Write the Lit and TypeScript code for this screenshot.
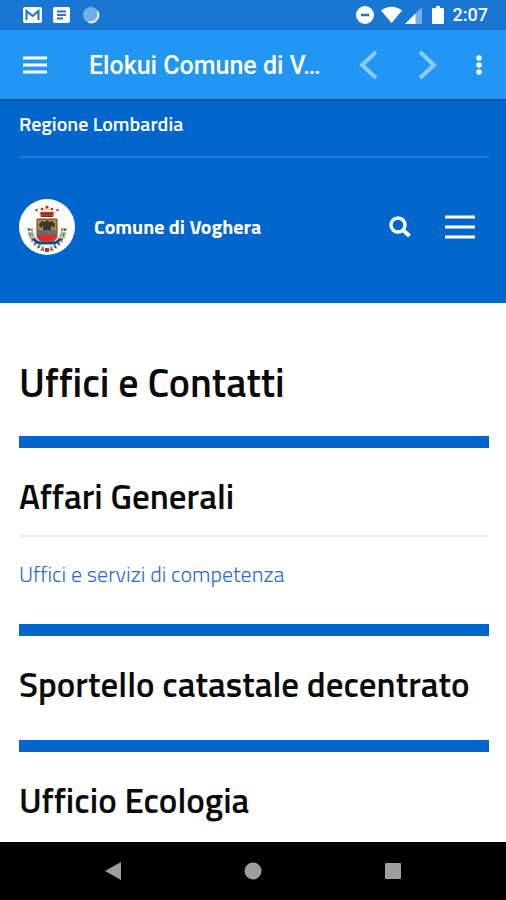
import { LitElement, html, css, svg, nothing } from "lit";
import { customElement } from "lit/decorators.js";

interface Office {
  name: string;
  link?: string;
}

const OFFICES: Office[] = [
  { name: "Affari Generali", link: "Uffici e servizi di competenza" },
  { name: "Sportello catastale decentrato" },
  { name: "Ufficio Ecologia" },
];

const crest = svg`
  <circle cx="28" cy="28" r="28" fill="#fff"/>
  <path d="M17 10l4 5 3-5 4-2 4 2 3 5 4-5-4 8H21z" fill="#e9d9c6"/>
  <path d="M21 13h14l-1 5H22z" fill="#b5452c"/>
  <path d="M22 15h12M22 17.500h12" stroke="#7a2a1c" stroke-width="1"/>
  <g fill="#a23c28"><circle cx="28" cy="8" r="1.600"/><circle cx="23" cy="10" r="1.300"/><circle cx="33" cy="10" r="1.300"/><circle cx="17.500" cy="11" r="1.200"/><circle cx="38.500" cy="11" r="1.200"/></g>
  <path d="M11 29c0 9 5 17 15 22M45 29c0 9-5 17-15 22" fill="none" stroke="#a9b09c" stroke-width="6" stroke-dasharray="2 2"/>
  <path d="M10 30c1 9 6 17 15 21M46 30c-1 9-6 17-15 21" fill="none" stroke="#465a3c" stroke-width="2" stroke-dasharray="2 3"/>
  <path d="M13 31c0 7 4 13 10 17M43 31c0 7-4 13-10 17" fill="none" stroke="#5d6b4c" stroke-width="2" stroke-dasharray="1 3"/>
  <path d="M15 40c3 5 8 4 13 4s10 1 13-4" fill="none" stroke="#24408f" stroke-width="3"/>
  <path d="M18 20h20v17c0 4-5 6-10 6s-10-2-10-6z" fill="#b08d45" stroke="#50452f"/>
  <path d="M19 31h18v6H19z" fill="#6a6a70"/>
  <path d="M19 36h18v1c0 4-4 5-9 5s-9-1-9-5z" fill="#e02b2b"/>
  <path d="M20 25l3-3 3 1 2-2 2 2 3-1 3 3-1 4-3-2v4h-8v-4l-3 2z" fill="#3d3728"/>
  <rect x="26" y="49" width="4" height="4" fill="#b92f2f"/>
`;

@customElement("app-root")
export class AppRoot extends LitElement {
  static styles = css`
    :host {
      display: flex;
      flex-direction: column;
      height: 100vh;
      overflow: hidden;
      background: #fff;
      color: #0a0a0a;
      font-family: "Titillium Web", "Noto Sans", sans-serif;
    }
    * { box-sizing: border-box; }
    svg { display: block; flex: none; }
    button {
      display: grid;
      place-items: center;
      padding: 0;
      border: 0;
      background: none;
      color: inherit;
      cursor: pointer;
    }
    h1, h2 { margin: 0; }
    .status {
      display: flex;
      flex: none;
      align-items: center;
      height: 30px;
      padding: 0 18px 0 22px;
      background: #1976d2;
      color: #fff;
      font: 500 18px/32px Roboto, sans-serif;
    }
    .notices { display: flex; align-items: center; gap: 10px; }
    .signals { display: flex; align-items: center; gap: 6px; margin-left: auto; }
    .clock { margin-left: 1px; }
    .appbar {
      position: relative;
      display: flex;
      flex: none;
      align-items: center;
      height: 69px;
      padding: 0 6px 0 12px;
      background: #2196f3;
      color: #fff;
      box-shadow: 0 1px 2px rgba(0, 0, 0, 0.4);
    }
    .appbar button { height: 48px; width: 46px; }
    .title {
      flex: 1;
      min-width: 0;
      margin-left: 31px;
      padding-top: 2px;
      overflow: hidden;
      white-space: nowrap;
      text-overflow: ellipsis;
      font: 500 25px/34px Roboto, sans-serif;
    }
    .appbar .step { width: 60px; color: #90caf9; }
    .appbar .more { width: 42px; }
    .site {
      flex: none;
      padding: 0 17px 0 19px;
      background: #0066cc;
      color: #fff;
    }
    .region {
      display: block;
      padding: 11px 0 18px;
      border-bottom: 2px solid #1f79d2;
      color: #fff;
      font-weight: 600;
      font-size: 20px;
      line-height: 28px;
      text-decoration: none;
    }
    .brandbar { display: flex; align-items: center; padding: 41px 7px 48px 0; }
    .brand {
      display: flex;
      align-items: center;
      gap: 19px;
      margin-right: auto;
      color: #fff;
      font-weight: 700;
      font-size: 20px;
      line-height: 28px;
      text-decoration: none;
    }
    .brandbar button { width: 44px; height: 44px; }
    .brandbar .menu { margin-left: 16px; }
    main { flex: 1; min-height: 0; overflow: hidden; padding: 0 17px 0 19px; }
    h1 {
      padding: 56px 0 29px;
      font-weight: 600;
      font-size: 40px;
      line-height: 48px;
      white-space: nowrap;
    }
    .office { border-top: 12px solid #0066cc; padding-bottom: 36px; }
    h2 {
      padding-top: 28px;
      font-weight: 600;
      font-size: 35px;
      line-height: 40px;
      white-space: nowrap;
    }
    .detail { margin-top: 19px; padding-top: 23px; border-top: 2px solid #f0f0f0; }
    .detail a {
      display: block;
      color: #2a6ccb;
      font-weight: 300;
      font-size: 22px;
      line-height: 28px;
      text-decoration: none;
    }
    .navbar {
      display: flex;
      flex: none;
      justify-content: center;
      gap: 92px;
      height: 58px;
      background: #000;
      color: #9e9e9e;
    }
    .navbar button { width: 48px; height: 58px; }
  `;

  render() {
    return html`
      <div class="status">
        <div class="notices">
          <svg width="20" height="16" viewBox="0 0 20 16"><rect x="1" width="19" height="16" rx="2" fill="#fff"/><path d="M4.500 13V4l6 5 6-5v9" fill="none" stroke="#1976d2" stroke-width="2"/></svg>
          <svg width="20" height="18" viewBox="0 0 20 18"><rect x="1" y="1" width="17" height="16" rx="2" fill="#fff"/><path d="M5 5.500h9M5 9h9M5 12.500h6" stroke="#1976d2" stroke-width="2"/></svg>
          <svg width="18" height="18" viewBox="0 0 18 18"><circle cx="9" cy="9" r="8" fill="#75aee6"/><path d="M15.500 5.500a7.500 7.500 0 0 1-9 10.500" fill="none" stroke="#e3effb" stroke-width="2"/></svg>
        </div>
        <div class="signals">
          <svg width="20" height="20" viewBox="0 0 20 20"><circle cx="10" cy="10" r="9" fill="#fff"/><path d="M6 10h8" stroke="#1976d2" stroke-width="2.500"/></svg>
          <svg width="42" height="18" viewBox="0 0 42 18"><path d="M0 4.500Q10.500-3 21 4.500L10.500 17z" fill="#fff"/><path d="M24 18L41 1v17z" fill="#75aee6"/><path d="M24 18L34.500 7.500V18z" fill="#fff"/></svg>
          <svg width="17" height="20" viewBox="-3 0 17 20"><path d="M1 3h3V1h4v2h3q1 0 1 1v14q0 1-1 1H1q-1 0-1-1V4q0-1 1-1z" fill="#fff"/></svg>
          <span class="clock">2:07</span>
        </div>
      </div>

      <div class="appbar">
        <button aria-label="Menu"><svg width="24" height="18" viewBox="0 0 24 18"><path d="M0 2h24M0 9h24M0 16h24" stroke="#fff" stroke-width="3"/></svg></button>
        <div class="title">Elokui Comune di V…</div>
        <button class="step" aria-label="Indietro"><svg width="20" height="30" viewBox="0 0 20 30"><path d="M18 2L4 15l14 13" fill="none" stroke="currentColor" stroke-width="4"/></svg></button>
        <button class="step" aria-label="Avanti"><svg width="20" height="30" viewBox="0 0 20 30"><path d="M2 2l14 13L2 28" fill="none" stroke="currentColor" stroke-width="4"/></svg></button>
        <button class="more" aria-label="Altro"><svg width="6" height="22" viewBox="0 0 6 22" fill="#fff"><circle cx="3" cy="4" r="2.700"/><circle cx="3" cy="11" r="2.700"/><circle cx="3" cy="18" r="2.700"/></svg></button>
      </div>

      <header class="site">
        <a class="region" href="#regione">Regione Lombardia</a>
        <div class="brandbar">
          <a class="brand" href="#home">
            <svg width="56" height="56" viewBox="0 0 56 56" aria-hidden="true">${crest}</svg>
            <span>Comune di Voghera</span>
          </a>
          <button aria-label="Cerca"><svg width="22" height="22" viewBox="0 0 22 22"><circle cx="9" cy="9" r="7" fill="none" stroke="#fff" stroke-width="3.400"/><path d="M14 14l6.500 6" stroke="#fff" stroke-width="4"/></svg></button>
          <button class="menu" aria-label="Navigazione"><svg width="32" height="24" viewBox="0 0 32 24"><path d="M1 2h30M1 12h30M1 22h30" stroke="#fff" stroke-width="3"/></svg></button>
        </div>
      </header>

      <main>
        <h1>Uffici e Contatti</h1>
        ${OFFICES.map(
          (office) => html`
            <section class="office">
              <h2>${office.name}</h2>
              ${office.link
                ? html`<div class="detail"><a href="#competenza">${office.link}</a></div>`
                : nothing}
            </section>
          `
        )}
      </main>

      <nav class="navbar">
        <button aria-label="Back"><svg width="16" height="18" viewBox="0 0 16 18"><path d="M0 9l16-9v18z" fill="currentColor"/></svg></button>
        <button aria-label="Home"><svg width="18" height="18" viewBox="0 0 18 18"><circle cx="9" cy="9" r="8.500" fill="currentColor"/></svg></button>
        <button aria-label="Recent"><svg width="16" height="16" viewBox="0 0 16 16"><rect width="16" height="16" rx="1" fill="currentColor"/></svg></button>
      </nav>
    `;
  }
}
